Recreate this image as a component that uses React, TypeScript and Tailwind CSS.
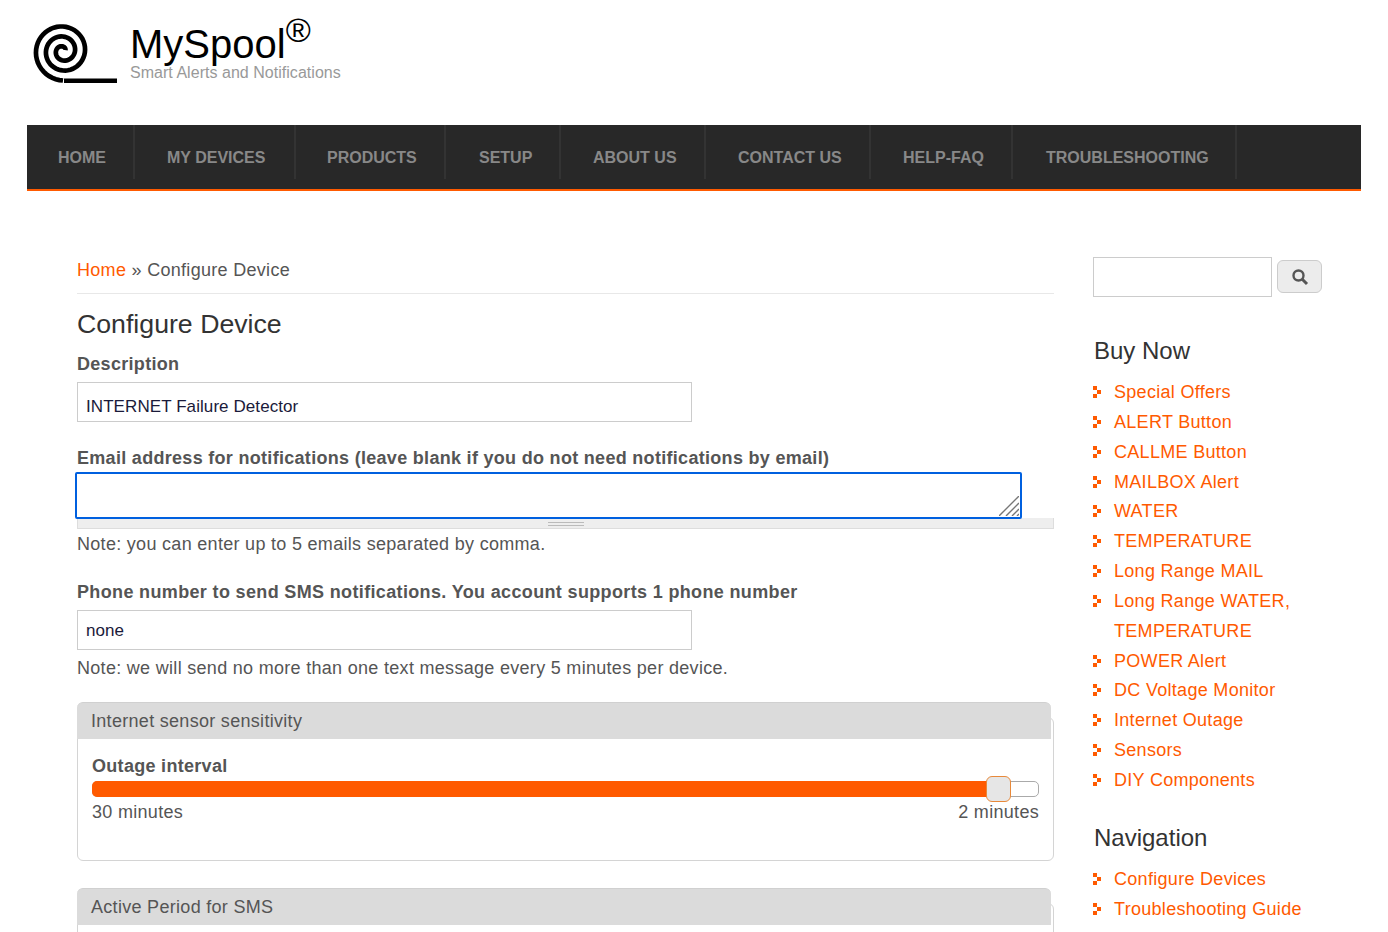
const nav = [
  ["HOME", "w-[108px] pl-[31px]"],
  ["MY DEVICES", "w-[161px] pl-[32px]"],
  ["PRODUCTS", "w-[150px] pl-[31px]"],
  ["SETUP", "w-[115px] pl-[33px]"],
  ["ABOUT US", "w-[145px] pl-[32px]"],
  ["CONTACT US", "w-[165px] pl-[32px]"],
  ["HELP-FAQ", "w-[142px] pl-[32px]"],
  ["TROUBLESHOOTING", "w-[224px] pl-[33px]"],
];
const buy = ["Special Offers", "ALERT Button", "CALLME Button", "MAILBOX Alert", "WATER", "TEMPERATURE", "Long Range MAIL", "Long Range WATER, TEMPERATURE", "POWER Alert", "DC Voltage Monitor", "Internet Outage", "Sensors", "DIY Components"];
const navLinks = ["Configure Devices", "Troubleshooting Guide", "Outage Troubleshooting"];

function spiralPath() {
  const cx = 30, cy = 28;
  const pts: string[] = [];
  for (let t = 0; t <= 2.72; t += 0.02) {
    const a = Math.PI / 2 + t * 2 * Math.PI;
    const r = 29.5 - 10 * t;
    pts.push((cx + r * Math.cos(a)).toFixed(2) + " " + (cy + r * Math.sin(a)).toFixed(2));
  }
  return "M" + pts.join("L");
}

function Bullet() {
  return (
    <svg width="8" height="12" viewBox="0 0 8 12" className="absolute left-0 top-[8px]" shapeRendering="crispEdges">
      <path fill="#ff5a00" d="M0 0h4v4H0zM4 4h4v4H4zM0 8h4v4H0z" />
    </svg>
  );
}
function SideList({ items }: { items: string[] }) {
  return (
    <ul className="mt-[10px] w-[214px] tracking-[0.3px]">
      {items.map((t) => (
        <li key={t} className="relative pl-[21px] text-[18px] leading-[29.85px] text-[#ff5a00]"><Bullet />{t}</li>
      ))}
    </ul>
  );
}
function Panel({ title, children, className }: { title: string; children?: React.ReactNode; className?: string }) {
  return (
    <div className={"relative " + className}>
      <div className="relative z-10 h-[37px] w-[974px] rounded-t-md border-t border-[#d0d0d0] bg-[#dbdbdb] pl-[14px] text-[18px] leading-[36px]">{title}</div>
      <div className="-mt-[22px] h-[144px] rounded-md border border-[#d4d4d4] px-[14px] pt-[35px]">{children}</div>
    </div>
  );
}
export default function App() {
  return (
    <div className="h-[932px] overflow-hidden bg-white px-[27px] text-[18px] tracking-[0.3px] text-[#555] [font-family:'Liberation_Sans',Arial,sans-serif]">
      <header className="flex h-[125px]">
        <svg width="90" height="66" viewBox="0 0 90 66" className="ml-[6px] mt-[23px] shrink-0">
          <path fill="none" stroke="#000" strokeWidth="4.7" d={spiralPath()} />
          <path fill="none" stroke="#000" strokeWidth="4.6" d="M31 57.7H84" />
        </svg>
        <div className="relative ml-[7px]">
          <div className="absolute left-0 top-[20px] whitespace-nowrap text-[40px] leading-[48px] tracking-normal text-black">MySpool<sup className="-top-[16px] text-[34px] leading-none">®</sup></div>
          <div className="absolute left-0 top-[64px] whitespace-nowrap text-[16px] leading-[18px] tracking-[0.03px] text-[#999]">Smart Alerts and Notifications</div>
        </div>
      </header>
      <nav className="flex h-[66px] items-start border-b-[2px] border-[#ff5a00] bg-[#282828] tracking-normal">
        {nav.map(([t, c]) => (
          <div key={t} className={"h-[54px] whitespace-nowrap border-r-2 border-[#333] text-[16px] font-bold leading-[66px] text-[#888] " + c}>{t}</div>
        ))}
      </nav>
      <div className="flex">
        <main className="ml-[50px] w-[977px] shrink-0">
          <div className="mt-[66px] h-[37px] border-b border-[#e8e8e8] leading-[26px]"><span className="text-[#ff5a00]">Home</span> » Configure Device</div>
          <h1 className="mt-[13px] text-[26.7px] leading-[34px] tracking-normal text-[#333]">Configure Device</h1>
          <div className="mt-[10px] font-bold leading-[26px]">Description</div>
          <input readOnly value="INTERNET Failure Detector" className="mt-[5px] block h-[40px] w-[615px] border border-[#ccc] px-2 pt-[10px] text-[17px] tracking-[0.08px] text-[#1a1a3a]" />
          <div className="mt-[23px] font-bold leading-[26px]">Email address for notifications (leave blank if you do not need notifications by email)</div>
          <div className="relative h-[58px]">
            <div className="absolute -left-[2px] top-[1px] z-10 h-[47px] w-[947px] rounded-[2px] border-2 border-[#0060df] bg-white">
              <svg width="20" height="20" viewBox="0 0 20 20" className="absolute bottom-[1px] right-[1px]">
                <path stroke="#777" strokeWidth="1.4" d="M0 20L20 0M7 20L20 7M13 20L20 13M18 20L20 18" />
              </svg>
            </div>
            <div className="absolute left-0 top-[47px] h-[11px] w-full border border-t-0 border-[#ddd] bg-[#eee]">
              <div className="mx-auto mt-[4px] h-[4px] w-9 border-y border-[#bbb]" />
            </div>
          </div>
          <div className="leading-[30px]">Note: you can enter up to 5 emails separated by comma.</div>
          <div className="mt-[20px] font-bold leading-[26px] tracking-[0.35px]">Phone number to send SMS notifications. You account supports 1 phone number</div>
          <input readOnly value="none" className="mt-[5px] block h-[40px] w-[615px] border border-[#ccc] px-2 pt-[2px] text-[17px] tracking-[0.08px] text-[#1a1a3a]" />
          <div className="mt-[3px] leading-[30px]">Note: we will send no more than one text message every 5 minutes per device.</div>
          <Panel title="Internet sensor sensitivity" className="mt-[19px]">
            <div className="font-bold leading-[26px]">Outage interval</div>
            <div className="relative mt-[2px] h-4 rounded-[5px] border border-[#aaa] bg-white">
              <div className="absolute -left-px -top-px h-4 w-[895px] rounded-l-[5px] bg-[#ff5a00]" />
              <div className="absolute left-[893px] top-[-6px] h-[26px] w-[25px] rounded-md border border-[#e8893a] bg-[#e6e6e6]" />
            </div>
            <div className="mt-[2px] flex justify-between leading-[26px]"><span>30 minutes</span><span>2 minutes</span></div>
          </Panel>
          <Panel title="Active Period for SMS" className="mt-[27px]" />
        </main>
        <aside className="ml-[39px] w-[229px] shrink-0">
          <div className="mt-[66px] flex items-start">
            <div className="h-10 w-[179px] border border-[#ccc]" />
            <div className="ml-[5px] mt-[3px] flex h-[33px] w-[45px] items-center justify-center rounded-md border border-[#ccc] bg-[#ececec]">
              <svg width="18" height="18" viewBox="0 0 18 18"><circle cx="7.5" cy="7.5" r="5" fill="none" stroke="#555" strokeWidth="2.4" /><path stroke="#555" strokeWidth="3" d="M11 11l5 5" /></svg>
            </div>
          </div>
          <h2 className="ml-px mt-[37px] text-[24px] leading-[34px] tracking-normal text-[#333]">Buy Now</h2>
          <SideList items={buy} />
          <h2 className="ml-px mt-[25px] text-[24px] leading-[34px] tracking-normal text-[#333]">Navigation</h2>
          <SideList items={navLinks} />
        </aside>
      </div>
    </div>
  );
}
